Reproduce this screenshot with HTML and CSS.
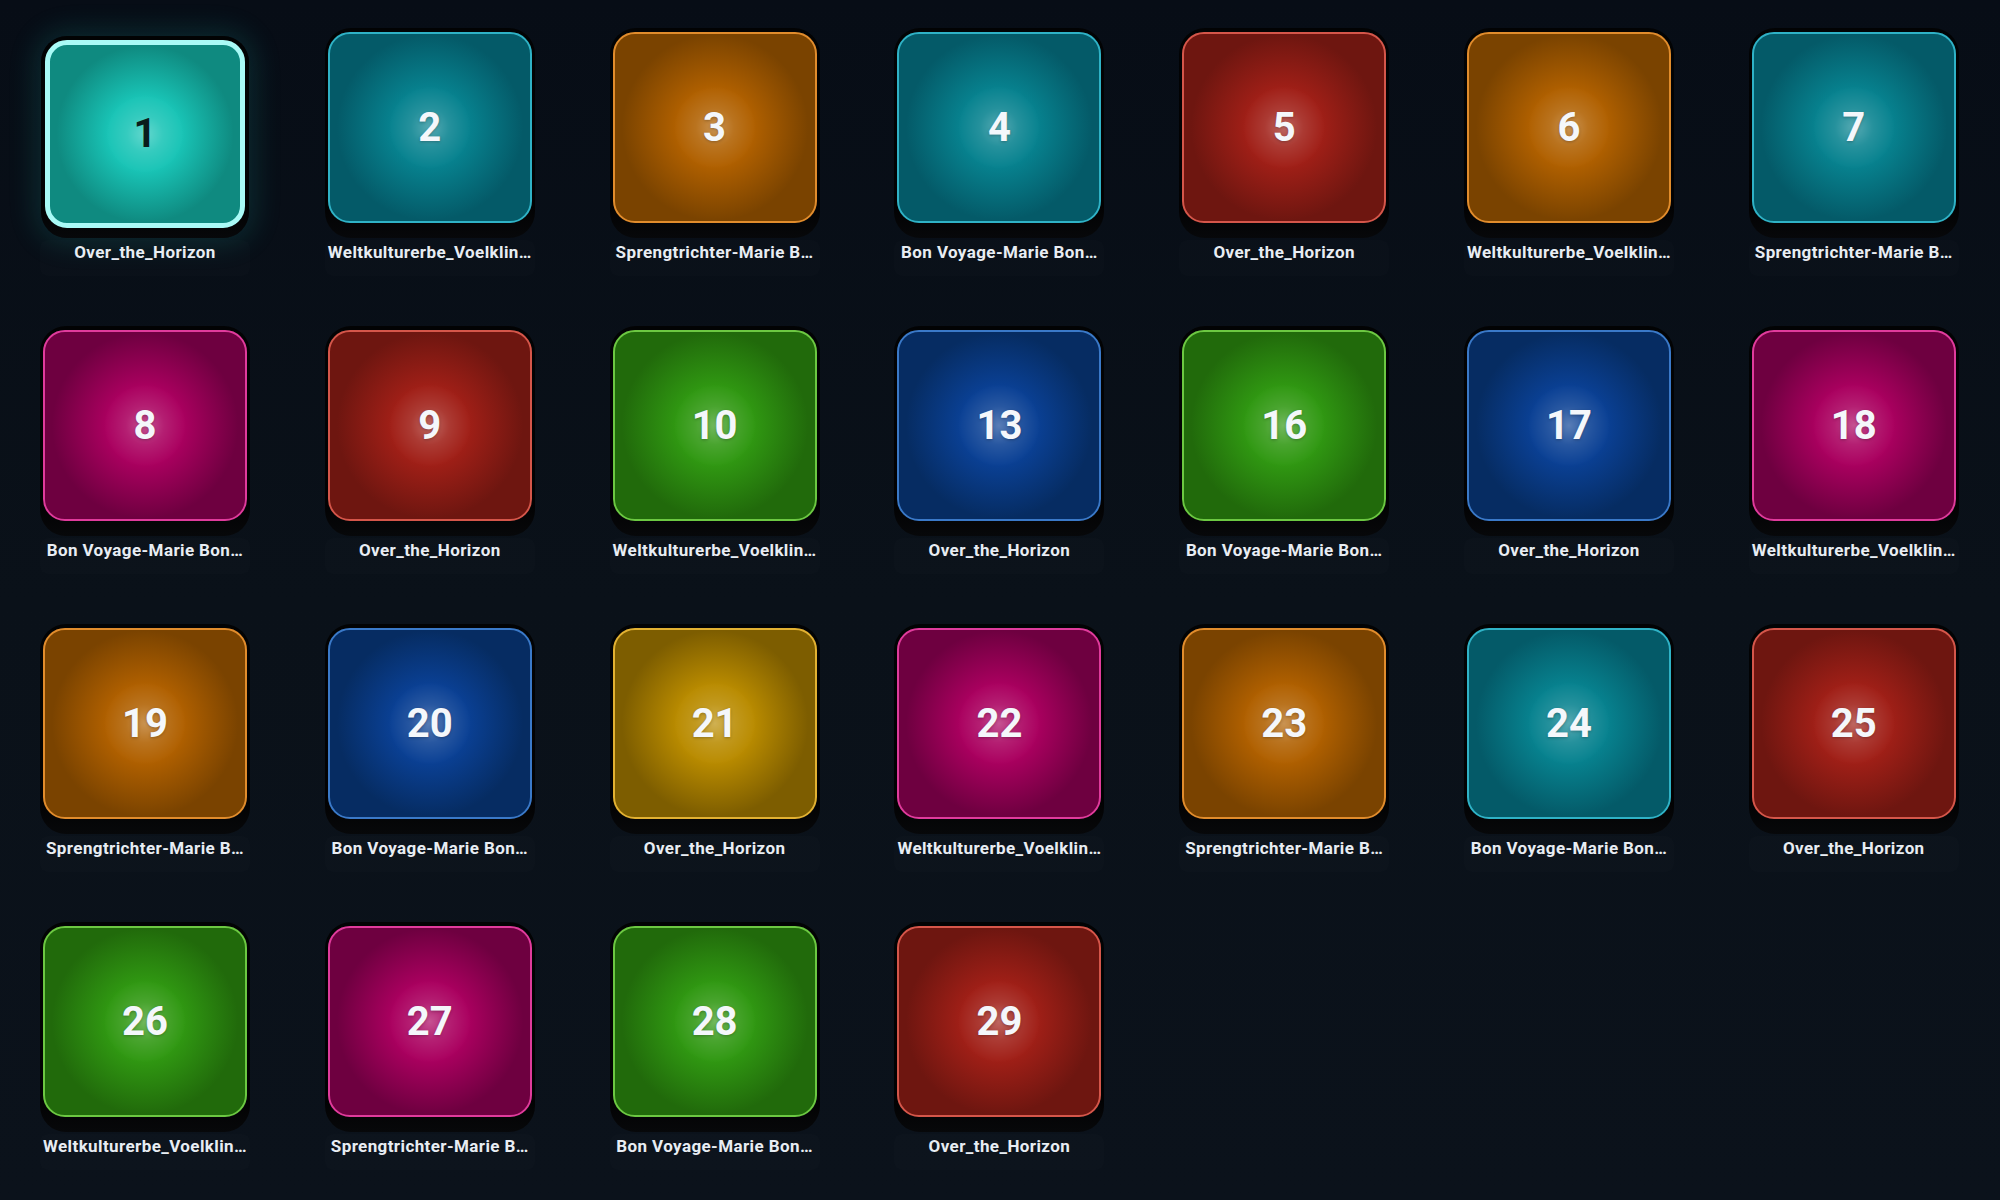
FILE: index.html
```html
<!DOCTYPE html>
<html lang="de">
<head>
<meta charset="utf-8">
<title>Pads</title>
<link rel="stylesheet" href="styles.css">
</head>
<body>
<main class="grid">
  <div class="cell selected"><div class="frame"><div class="pad c-cyan"><span class="num">1</span></div></div><div class="label">Over_the_Horizon</div></div>
  <div class="cell"><div class="frame"><div class="pad c-teal"><span class="num">2</span></div></div><div class="label">Weltkulturerbe_Voelklin…</div></div>
  <div class="cell"><div class="frame"><div class="pad c-orange"><span class="num">3</span></div></div><div class="label">Sprengtrichter-Marie B…</div></div>
  <div class="cell"><div class="frame"><div class="pad c-teal"><span class="num">4</span></div></div><div class="label">Bon Voyage-Marie Bon…</div></div>
  <div class="cell"><div class="frame"><div class="pad c-red"><span class="num">5</span></div></div><div class="label">Over_the_Horizon</div></div>
  <div class="cell"><div class="frame"><div class="pad c-orange"><span class="num">6</span></div></div><div class="label">Weltkulturerbe_Voelklin…</div></div>
  <div class="cell"><div class="frame"><div class="pad c-teal"><span class="num">7</span></div></div><div class="label">Sprengtrichter-Marie B…</div></div>

  <div class="cell"><div class="frame"><div class="pad c-magenta"><span class="num">8</span></div></div><div class="label">Bon Voyage-Marie Bon…</div></div>
  <div class="cell"><div class="frame"><div class="pad c-red"><span class="num">9</span></div></div><div class="label">Over_the_Horizon</div></div>
  <div class="cell"><div class="frame"><div class="pad c-green"><span class="num">10</span></div></div><div class="label">Weltkulturerbe_Voelklin…</div></div>
  <div class="cell"><div class="frame"><div class="pad c-blue"><span class="num">13</span></div></div><div class="label">Over_the_Horizon</div></div>
  <div class="cell"><div class="frame"><div class="pad c-green"><span class="num">16</span></div></div><div class="label">Bon Voyage-Marie Bon…</div></div>
  <div class="cell"><div class="frame"><div class="pad c-blue"><span class="num">17</span></div></div><div class="label">Over_the_Horizon</div></div>
  <div class="cell"><div class="frame"><div class="pad c-magenta"><span class="num">18</span></div></div><div class="label">Weltkulturerbe_Voelklin…</div></div>

  <div class="cell"><div class="frame"><div class="pad c-orange"><span class="num">19</span></div></div><div class="label">Sprengtrichter-Marie B…</div></div>
  <div class="cell"><div class="frame"><div class="pad c-blue"><span class="num">20</span></div></div><div class="label">Bon Voyage-Marie Bon…</div></div>
  <div class="cell"><div class="frame"><div class="pad c-yellow"><span class="num">21</span></div></div><div class="label">Over_the_Horizon</div></div>
  <div class="cell"><div class="frame"><div class="pad c-magenta"><span class="num">22</span></div></div><div class="label">Weltkulturerbe_Voelklin…</div></div>
  <div class="cell"><div class="frame"><div class="pad c-orange"><span class="num">23</span></div></div><div class="label">Sprengtrichter-Marie B…</div></div>
  <div class="cell"><div class="frame"><div class="pad c-teal"><span class="num">24</span></div></div><div class="label">Bon Voyage-Marie Bon…</div></div>
  <div class="cell"><div class="frame"><div class="pad c-red"><span class="num">25</span></div></div><div class="label">Over_the_Horizon</div></div>

  <div class="cell"><div class="frame"><div class="pad c-green"><span class="num">26</span></div></div><div class="label">Weltkulturerbe_Voelklin…</div></div>
  <div class="cell"><div class="frame"><div class="pad c-magenta"><span class="num">27</span></div></div><div class="label">Sprengtrichter-Marie B…</div></div>
  <div class="cell"><div class="frame"><div class="pad c-green"><span class="num">28</span></div></div><div class="label">Bon Voyage-Marie Bon…</div></div>
  <div class="cell"><div class="frame"><div class="pad c-red"><span class="num">29</span></div></div><div class="label">Over_the_Horizon</div></div>
</main>
</body>
</html>
```

FILE: styles.css
```css
html, body {
  margin: 0;
  padding: 0;
  height: 100%;
}

body {
  background: linear-gradient(180deg, #070d16 0%, #0a1119 50%, #0b121b 100%);
  font-family: Roboto, "Noto Sans", "Liberation Sans", sans-serif;
  overflow: hidden;
}

.grid {
  display: grid;
  grid-template-columns: repeat(7, 210px);
  column-gap: 74.8px;
  row-gap: 50px;
  padding: 28px 0 0 40px;
}

.cell {
  display: flex;
  flex-direction: column;
  align-items: center;
  width: 210px;
}

.frame {
  box-sizing: border-box;
  width: 210px;
  height: 210px;
  padding: 4px 3px 15px 3px;
  border-radius: 26px;
  background: linear-gradient(180deg, #020304 0%, #020203 85%, #07080a 100%);
}

.pad {
  box-sizing: border-box;
  width: 204px;
  height: 191px;
  border-radius: 22px;
  border: 2px solid var(--bd);
  display: flex;
  align-items: center;
  justify-content: center;
  background:
    radial-gradient(circle at 50% 50%, rgba(255, 255, 255, 0.32) 0%, rgba(255, 255, 255, 0.12) 14%, rgba(255, 255, 255, 0) 30%),
    radial-gradient(circle at 50% 50%, var(--mid) 0%, var(--mid) 28%, var(--edge) 68%);
}

.num {
  font-size: 40px;
  font-weight: 700;
  color: #f4f7fb;
  line-height: 1;
  text-shadow: 0 1px 3px rgba(0, 0, 0, 0.25);
}

.label {
  box-sizing: border-box;
  width: 210px;
  height: 36px;
  margin-top: 2px;
  padding: 2px 2px 0;
  border-radius: 8px;
  background: rgba(255, 255, 255, 0.012);
  color: #e8edf3;
  font-size: 17px;
  font-weight: 700;
  letter-spacing: 0.4px;
  line-height: 20px;
  text-align: center;
  white-space: nowrap;
  overflow: hidden;
  text-overflow: ellipsis;
}

/* selected pad: pressed down, thick light border, glow */
.cell.selected .frame {
  width: 208px;
  height: 202px;
  margin-top: 8px;
  padding: 4px 4px 10px 4px;
  border-radius: 26px;
  box-shadow: 0 0 28px 6px rgba(30, 190, 180, 0.16);
}

.cell.selected .pad {
  width: 200px;
  height: 188px;
  border: 5px solid #a9faf6;
  border-radius: 22px;
}

.cell.selected .num {
  color: #0a1c1b;
  text-shadow: none;
}

/* colours */
.c-cyan    { --mid: #19c4b6; --edge: #0f8a80; --bd: #a9faf6; }
.c-teal    { --mid: #07828f; --edge: #045a68; --bd: #2fb2c6; }
.c-orange  { --mid: #b06000; --edge: #7a4300; --bd: #e18c2c; }
.c-red     { --mid: #a01f17; --edge: #6e1610; --bd: #d5564a; }
.c-magenta { --mid: #aa005f; --edge: #6e0040; --bd: #e03b9c; }
.c-green   { --mid: #309812; --edge: #216a0b; --bd: #6cc842; }
.c-blue    { --mid: #0a4094; --edge: #062c62; --bd: #3a79c8; }
.c-yellow  { --mid: #b98b00; --edge: #7d5d00; --bd: #e2b132; }
```
